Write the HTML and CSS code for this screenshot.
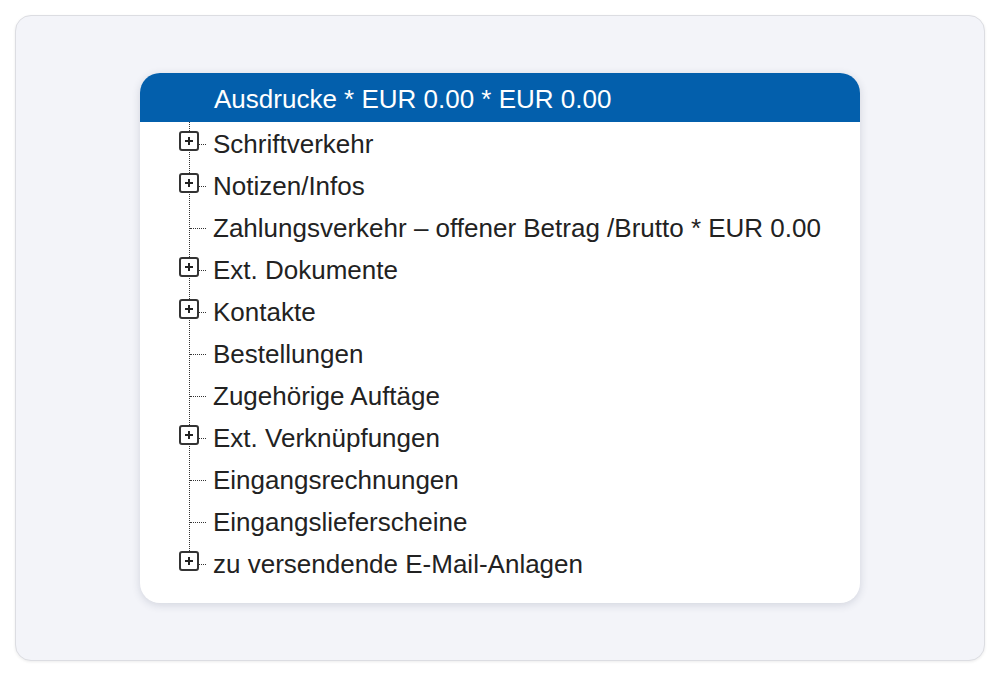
FILE: index.html
```html
<!DOCTYPE html>
<html lang="de">
<head>
    <meta charset="utf-8">
    <title>Ausdrucke</title>
    <link rel="stylesheet" href="styles.css">
</head>
<body>
<div class="frame">
    <div class="card">
        <div class="card-head">Ausdrucke * EUR 0.00 * EUR 0.00</div>
        <ul class="tree">
            <li class="node"><span class="branch"><span class="toggle"></span></span><span class="label">Schriftverkehr</span></li>
            <li class="node"><span class="branch"><span class="toggle"></span></span><span class="label">Notizen/Infos</span></li>
            <li class="node"><span class="branch"></span><span class="label">Zahlungsverkehr – offener Betrag /Brutto * EUR 0.00</span></li>
            <li class="node"><span class="branch"><span class="toggle"></span></span><span class="label">Ext. Dokumente</span></li>
            <li class="node"><span class="branch"><span class="toggle"></span></span><span class="label">Kontakte</span></li>
            <li class="node"><span class="branch"></span><span class="label">Bestellungen</span></li>
            <li class="node"><span class="branch"></span><span class="label">Zugehörige Auftäge</span></li>
            <li class="node"><span class="branch"><span class="toggle"></span></span><span class="label">Ext. Verknüpfungen</span></li>
            <li class="node"><span class="branch"></span><span class="label">Eingangsrechnungen</span></li>
            <li class="node"><span class="branch"></span><span class="label">Eingangslieferscheine</span></li>
            <li class="node"><span class="branch"><span class="toggle"></span></span><span class="label">zu versendende E-Mail-Anlagen</span></li>
        </ul>
    </div>
</div>
</body>
</html>
```

FILE: styles.css
```css
html, body {
    margin: 0;
    padding: 0;
    background: #ffffff;
    font-family: "Liberation Sans", Arial, sans-serif;
    color: #222222;
}

.frame {
    margin: 15px;
    height: 646px;
    box-sizing: border-box;
    border: 1px solid #dcdde2;
    border-radius: 16px;
    background: #f3f4f9;
    box-shadow: 0 1px 3px rgba(0, 0, 0, 0.08);
    display: flex;
    align-items: center;
    justify-content: center;
}

.card {
    width: 720px;
    height: 530px;
    background: #ffffff;
    border-radius: 20px;
    box-shadow: 0 2px 8px rgba(40, 50, 80, 0.16);
    overflow: hidden;
}

.card-head {
    height: 49px;
    line-height: 52px;
    background: #035fac;
    color: #ffffff;
    font-size: 26px;
    padding-left: 74px;
}

.tree {
    list-style: none;
    margin: 0;
    padding: 1px 0 0 39px;
}

.node {
    display: flex;
    height: 42px;
    line-height: 42px;
    font-size: 26px;
}

.branch {
    position: relative;
    width: 34px;
    flex: none;
}

.branch::before {
    content: "";
    position: absolute;
    left: 10px;
    top: -1px;
    bottom: 0;
    border-left: 1px dotted #333333;
}

.node:last-child .branch::before {
    bottom: 22px;
}

.branch::after {
    content: "";
    position: absolute;
    left: 11px;
    width: 16px;
    top: 21px;
    border-top: 1px dotted #333333;
}

.toggle {
    position: absolute;
    left: 0;
    top: 8px;
    width: 20px;
    height: 20px;
    box-sizing: border-box;
    border: 2px solid #333333;
    border-radius: 3px;
    background: #ffffff;
    z-index: 1;
}

.toggle::before,
.toggle::after {
    content: "";
    position: absolute;
    background: #222222;
}

.toggle::before {
    left: 4px;
    right: 4px;
    top: 7px;
    height: 2px;
}

.toggle::after {
    top: 4px;
    bottom: 4px;
    left: 7px;
    width: 2px;
}

.label {
    white-space: nowrap;
}
```
